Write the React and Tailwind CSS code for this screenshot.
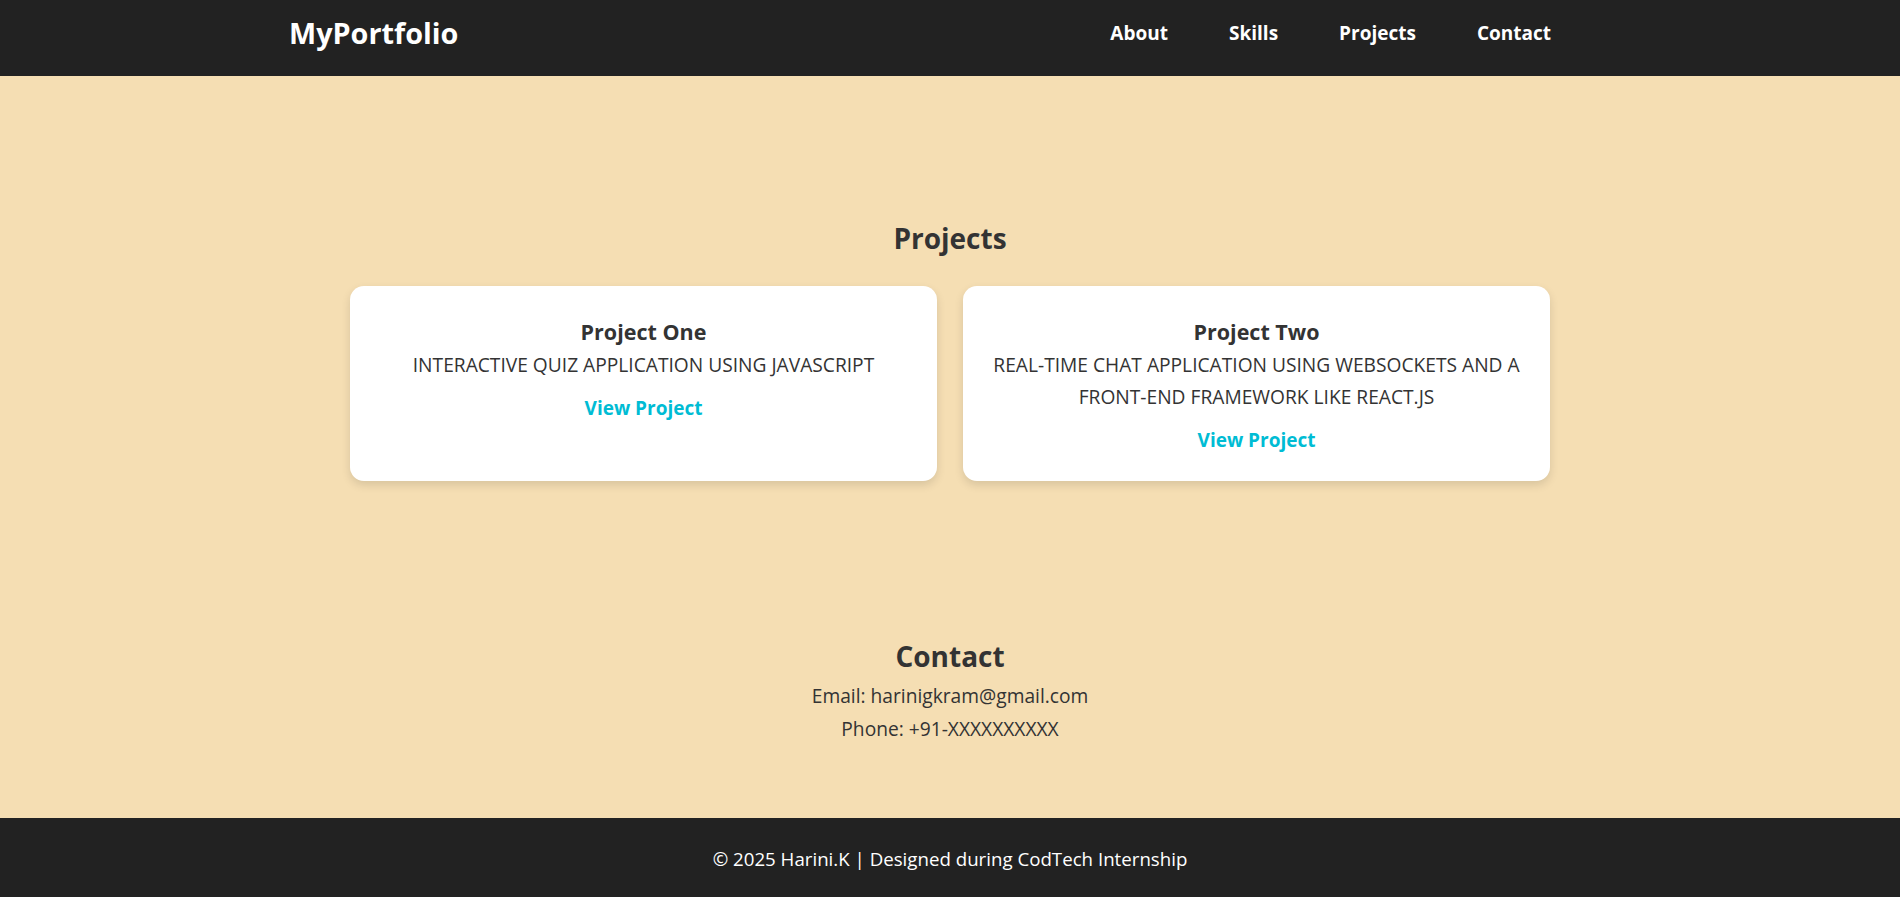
export default function App() {
  const font = { fontFamily: '"Open Sans", "Noto Sans", sans-serif' };
  return (
    <div className="min-h-screen flex flex-col bg-[#f5deb3] text-[#333]" style={font}>
      <header className="h-[76px] bg-[#222] flex items-center justify-between pl-[289px] pr-[349px] pb-[9px] shrink-0">
        <div className="text-white font-bold text-[28.8px] leading-none">MyPortfolio</div>
        <nav className="flex gap-[61px] text-white font-bold text-[19px]">
          <a href="#about">About</a>
          <a href="#skills">Skills</a>
          <a href="#projects">Projects</a>
          <a href="#contact">Contact</a>
        </nav>
      </header>
      <main className="flex-1 flex flex-col">
        <section className="pt-[145px]">
          <h2 className="text-center font-bold text-[28px] leading-[35px]">Projects</h2>
          <div className="w-[1200px] mx-auto mt-[30px] grid grid-cols-2 gap-[26px]">
            <div className="bg-white rounded-[14px] shadow-[0_4px_10px_rgba(0,0,0,0.12)] px-6 pt-8 pb-[27px] text-center">
              <h3 className="font-bold text-[21.5px] leading-[28px]">Project One</h3>
              <p className="uppercase text-[19.2px] leading-[32px] mt-[3px]">Interactive quiz application using JavaScript</p>
              <a href="#" className="inline-block mt-[13px] text-[#00bcd4] font-bold text-[19px] leading-[28px]">View Project</a>
            </div>
            <div className="bg-white rounded-[14px] shadow-[0_4px_10px_rgba(0,0,0,0.12)] px-6 pt-8 pb-[27px] text-center">
              <h3 className="font-bold text-[21.5px] leading-[28px]">Project Two</h3>
              <p className="uppercase text-[19.2px] leading-[32px] mt-[3px]">Real-time chat application using WebSockets and a front-end framework like React.js</p>
              <a href="#" className="inline-block mt-[13px] text-[#00bcd4] font-bold text-[19px] leading-[28px]">View Project</a>
            </div>
          </div>
        </section>
        <section className="pt-[158px] text-center">
          <h2 className="font-bold text-[28px] leading-[35px]">Contact</h2>
          <p className="text-[19.2px] leading-[32px] mt-[6px]">Email: harinigkram@gmail.com</p>
          <p className="text-[19.2px] leading-[32px] mt-[1px]">Phone: +91-XXXXXXXXXX</p>
        </section>
      </main>
      <footer className="h-[79px] bg-[#222] text-white flex items-center justify-center text-[18.7px] pt-[3px] shrink-0">
        © 2025 Harini.K | Designed during CodTech Internship
      </footer>
    </div>
  );
}
